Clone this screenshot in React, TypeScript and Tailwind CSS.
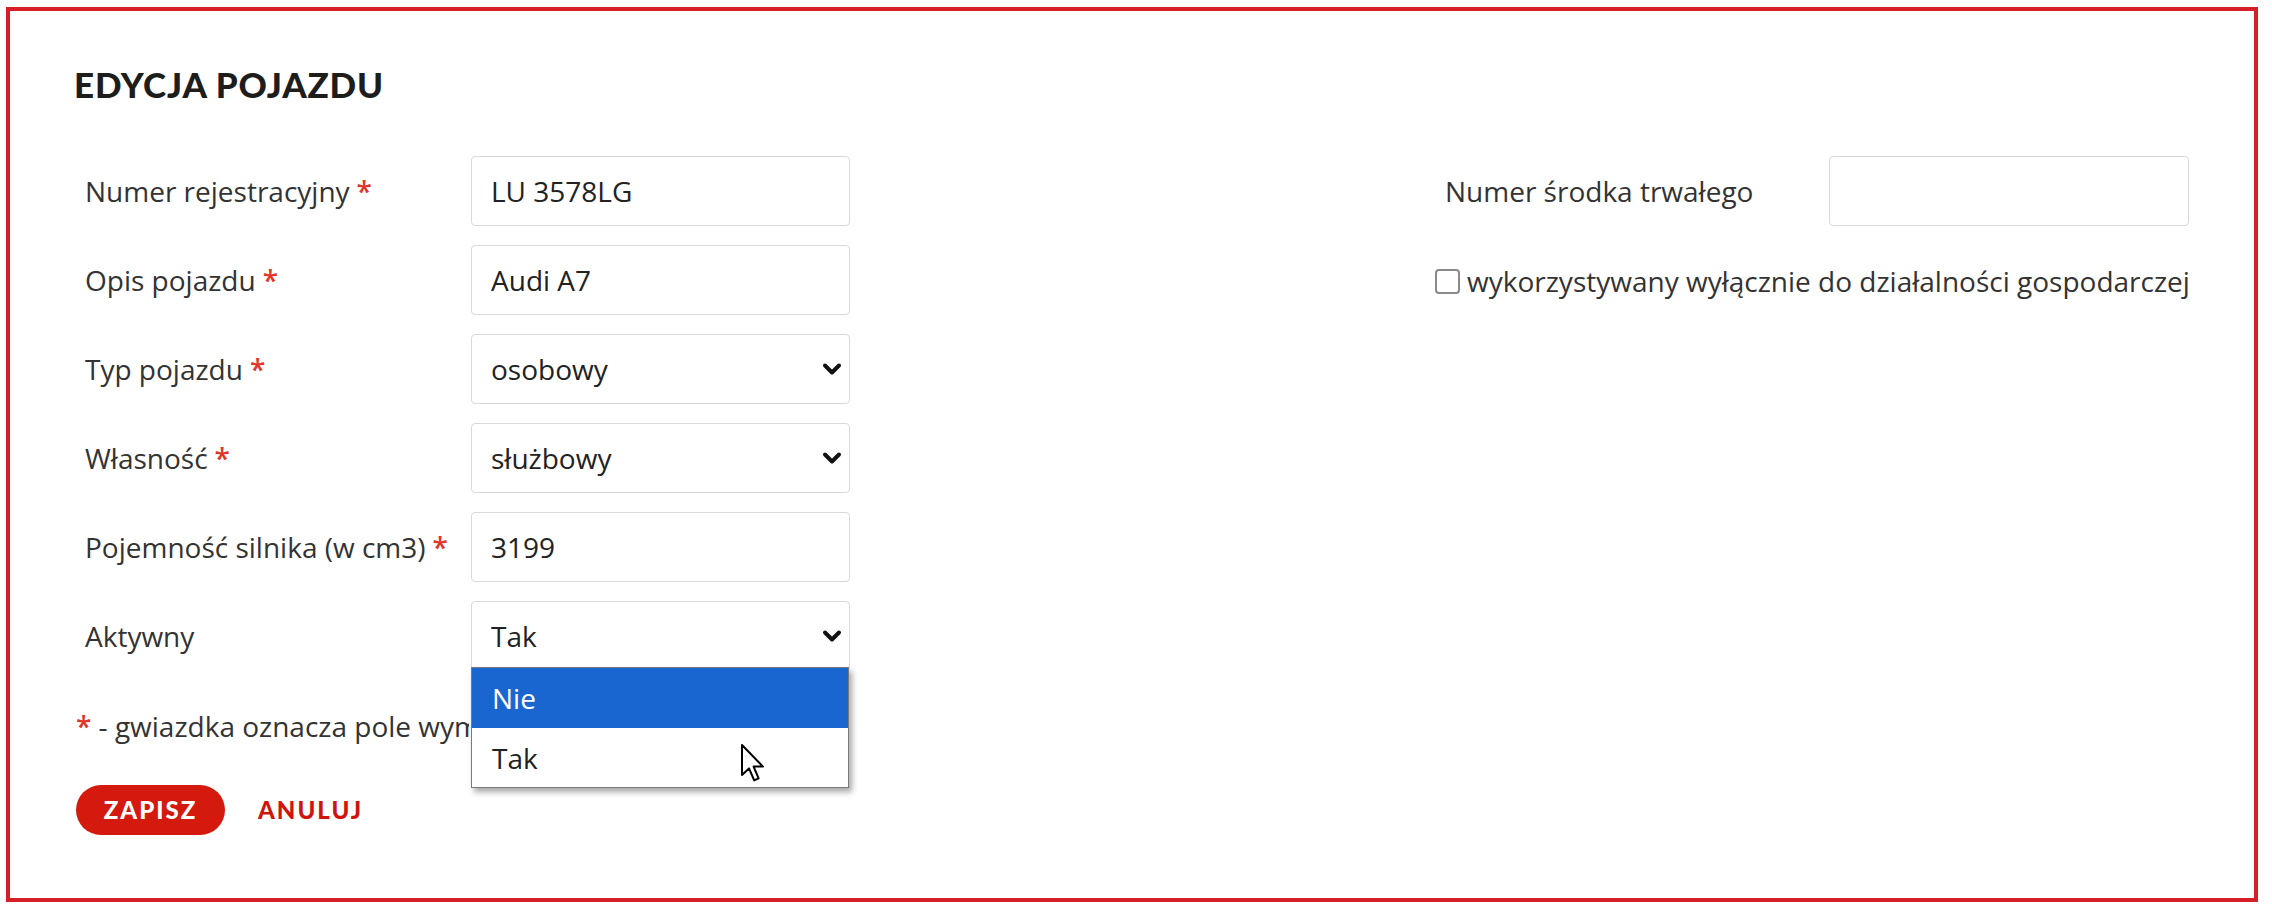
import React from 'react';

const Req: React.FC = () => (
  <span className="ml-[7px] font-semibold text-[#e2352a]">*</span>
);

const Chevron: React.FC = () => (
  <svg width="20" height="14" viewBox="0 0 20 14" className="pointer-events-none absolute right-[8px] top-1/2 -translate-y-1/2">
    <path d="M3 3.5l7 7 7-7" fill="none" stroke="#111" strokeWidth="4" strokeLinecap="round" strokeLinejoin="round" />
  </svg>
);

const fieldCls =
  "h-[70px] border border-[#d9d9d9] rounded-[4px] bg-white px-[19px] text-[28px] text-[#222] outline-none font-['Open_Sans',sans-serif]";

const TextField: React.FC<{ value: string; width?: string }> = ({ value, width = 'w-[379px]' }) => (
  <input readOnly value={value} className={fieldCls + ' ' + width} />
);

const SelectField: React.FC<{ value: string; options: string[] }> = ({ value, options }) => (
  <div className="relative w-[379px]">
    <select defaultValue={value} className={fieldCls + ' w-[379px] appearance-none'}>
      {options.map((o) => (
        <option key={o}>{o}</option>
      ))}
    </select>
    <Chevron />
  </div>
);

const Row: React.FC<{ label: string; required?: boolean; children: React.ReactNode }> = ({ label, required, children }) => (
  <div className="flex items-center">
    <div className="w-[397px] pl-[11px] text-[28px] leading-[38px] text-[#333]">
      {label}
      {required && <Req />}
    </div>
    {children}
  </div>
);

const Cursor: React.FC = () => (
  <svg width="24" height="38" viewBox="0 0 12 19" className="absolute left-[269px] top-[76px]">
    <path d="M0.5 0.5 L0.5 15.5 L4 12.2 L6.6 18.2 L8.8 17.2 L6.3 11.3 L11 11.3 Z" fill="#fff" stroke="#000" strokeWidth="1" strokeLinejoin="round" />
  </svg>
);

const App: React.FC = () => {
  return (
    <div className="min-h-screen bg-white pt-[7px] pl-[6px] font-['Open_Sans',sans-serif]">
      <div className="w-[2252px] h-[895px] border-4 border-[#d51e26] pl-[64px] pt-[56px]">
        <h1 className="font-['Lato',sans-serif] font-black text-[35px] leading-[35px] tracking-[0.8px] text-[#1d1d1b]">EDYCJA POJAZDU</h1>

        <div className="flex mt-[54px]">
          {/* lewa kolumna */}
          <div className="w-[1359px]">
            <div className="flex flex-col gap-[19px]">
              <Row label="Numer rejestracyjny" required>
                <TextField value="LU 3578LG" />
              </Row>
              <Row label="Opis pojazdu" required>
                <TextField value="Audi A7" />
              </Row>
              <Row label="Typ pojazdu" required>
                <SelectField value="osobowy" options={['osobowy', 'ciężarowy']} />
              </Row>
              <Row label="Własność" required>
                <SelectField value="służbowy" options={['służbowy', 'prywatny']} />
              </Row>
              <Row label="Pojemność silnika (w cm3)" required>
                <TextField value="3199" />
              </Row>
              <Row label="Aktywny">
                <div className="relative">
                  <SelectField value="Tak" options={['Nie', 'Tak']} />
                  <div className="absolute left-0 top-[66px] z-10 w-[378px] border border-[#7a7a7a] bg-white shadow-[3px_4px_6px_rgba(0,0,0,0.35)]">
                    <div className="h-[60px] bg-[#1a66d1] pl-[20px] flex items-center text-[28px] text-white">Nie</div>
                    <div className="h-[59px] pl-[20px] flex items-center text-[28px] text-[#222]">Tak</div>
                    <Cursor />
                  </div>
                </div>
              </Row>
            </div>

            {/* tekst przykryty rozwiniętą listą */}
            <p className="mt-[36px] ml-[2px] w-[393px] overflow-hidden whitespace-nowrap text-[28px] leading-[38px] text-[#333]">
              <span className="font-semibold text-[#e2352a]">*</span> - gwiazdka oznacza pole wymagane
            </p>

            <div className="mt-[40px] ml-[2px] flex items-center gap-[33px] font-['Lato',sans-serif] font-black text-[24px] tracking-[2px]">
              <button className="w-[149px] h-[50px] rounded-full bg-[#d4190e] text-white">ZAPISZ</button>
              <button className="text-[#d0140c]">ANULUJ</button>
            </div>
          </div>

          {/* prawa kolumna */}
          <div>
            <div className="flex items-center">
              <div className="w-[396px] pl-[12px] text-[28px] leading-[38px] text-[#333]">Numer środka trwałego</div>
              <TextField value="" width="w-[360px]" />
            </div>
            <label className="mt-[36px] ml-[2px] flex items-center text-[28px] leading-[38px] text-[#333]">
              <span className="w-[25px] h-[25px] border-2 border-[#8a8a8a] rounded-[4px] bg-white" />
              <span className="ml-[7px]">wykorzystywany wyłącznie do działalności gospodarczej</span>
            </label>
          </div>
        </div>
      </div>
    </div>
  );
};

export default App;
